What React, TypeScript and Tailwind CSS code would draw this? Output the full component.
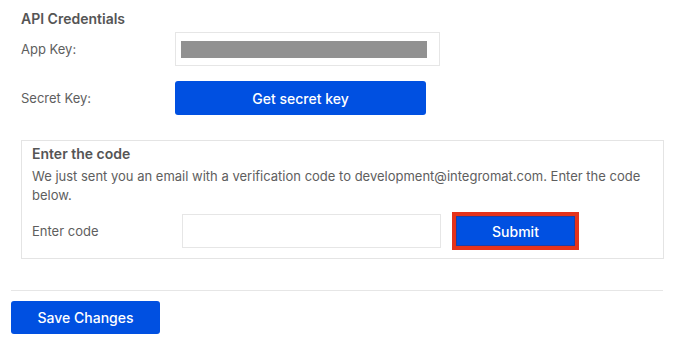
export default function App() {
  return (
    <div className="h-[345px] w-[677px] bg-white font-['Inter','Liberation_Sans',sans-serif] text-[13px] text-[#5e5e5e]">
      <div className="pl-[21px] pr-[13px] pt-[9px]">
        <h2 className="text-[14px] font-semibold leading-[20px] text-[#555]">API Credentials</h2>

        <div className="mt-[3px] flex items-center">
          <span className="w-[154px] leading-[20px]">App Key:</span>
          <div className="flex h-[34px] w-[265px] items-center border border-[#e6e6e6] px-[5px]">
            <div className="h-[17px] w-[246px] bg-[#919191]" />
          </div>
        </div>

        <div className="mt-[15px] flex items-center">
          <span className="w-[154px] leading-[20px]">Secret Key:</span>
          <button className="h-[34px] w-[251px] rounded-[3px] bg-[#0050e1] text-[14px] font-medium text-white">
            Get secret key
          </button>
        </div>

        <div className="mt-[25px] h-[119px] border border-[#e4e4e4] px-[10px] pt-[3px]">
          <h3 className="text-[14px] font-semibold leading-[20px] text-[#555]">Enter the code</h3>
          <p className="mt-[3px] leading-[19px]">
            We just sent you an email with a verification code to development@integromat.com. Enter the code below.
          </p>
          <div className="mt-[7px] flex items-center">
            <span className="w-[150px] leading-[20px]">Enter code</span>
            <input className="h-[34px] w-[259px] border border-[#e6e6e6] outline-none" />
            <div className="ml-[11px] border-[4px] border-[#e5331b]">
              <button className="h-[30px] w-[119px] border border-[#1d3fa6] bg-[#0050e1] text-[14px] font-medium text-white">
                Submit
              </button>
            </div>
          </div>
        </div>
      </div>

      <div className="ml-[11px] mr-[14px] mt-[31px] border-t border-[#e6e6e6]" />
      <div className="px-[11px] pt-[10px]">
        <button className="h-[33px] w-[149px] rounded-[3px] bg-[#0050e1] text-[14px] font-medium text-white">
          Save Changes
        </button>
      </div>
    </div>
  );
}
